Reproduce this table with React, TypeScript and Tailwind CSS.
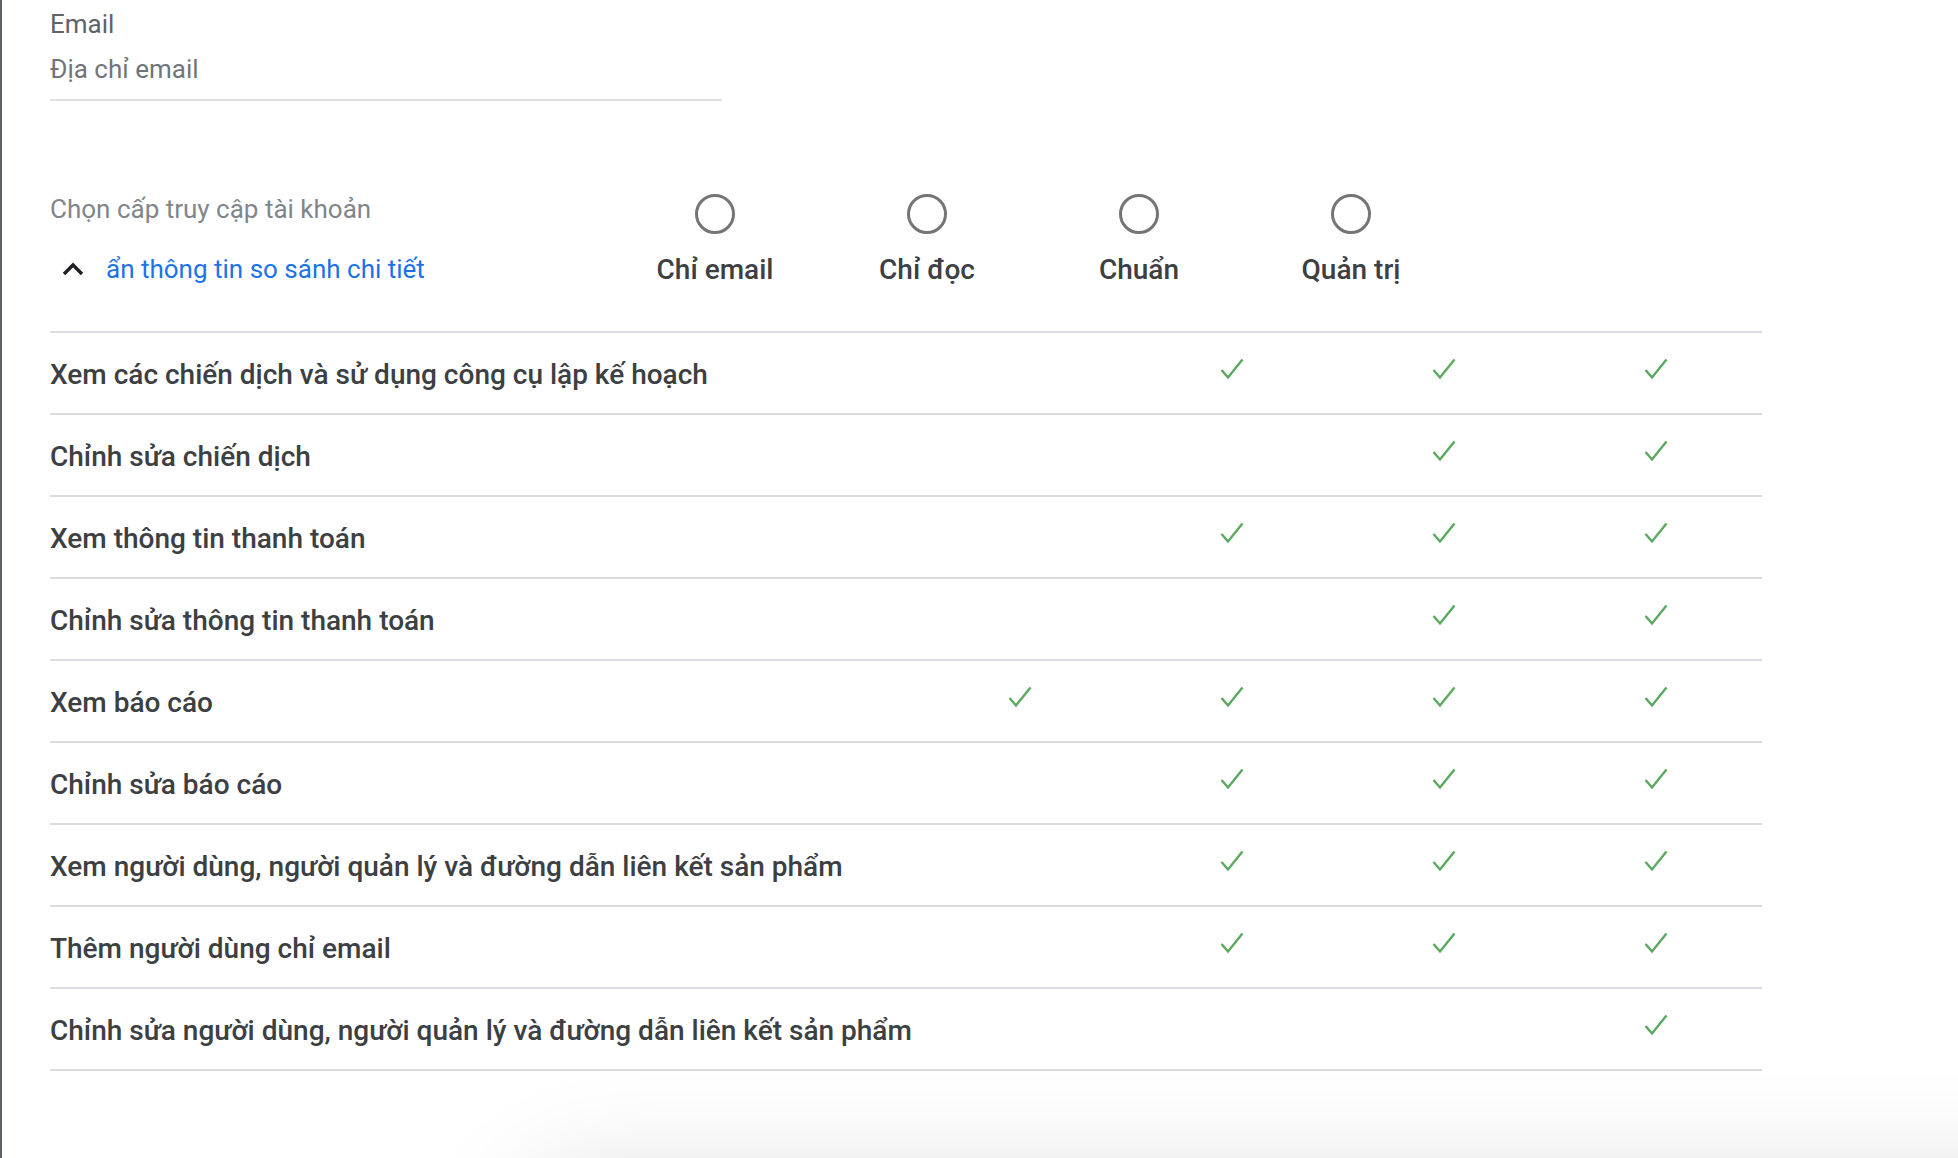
import * as React from "react";

const columns = ["Chỉ email", "Chỉ đọc", "Chuẩn", "Quản trị"];

const permissions: { label: string; access: boolean[] }[] = [
  { label: "Xem các chiến dịch và sử dụng công cụ lập kế hoạch", access: [false, true, true, true] },
  { label: "Chỉnh sửa chiến dịch", access: [false, false, true, true] },
  { label: "Xem thông tin thanh toán", access: [false, true, true, true] },
  { label: "Chỉnh sửa thông tin thanh toán", access: [false, false, true, true] },
  { label: "Xem báo cáo", access: [true, true, true, true] },
  { label: "Chỉnh sửa báo cáo", access: [false, true, true, true] },
  { label: "Xem người dùng, người quản lý và đường dẫn liên kết sản phẩm", access: [false, true, true, true] },
  { label: "Thêm người dùng chỉ email", access: [false, true, true, true] },
  { label: "Chỉnh sửa người dùng, người quản lý và đường dẫn liên kết sản phẩm", access: [false, false, false, true] },
];

function Check() {
  return (
    <svg width="26" height="22" viewBox="0 0 26 22" fill="none" className="mb-2">
      <path d="M2.5 12 L9 19.5 L23.5 1.5" stroke="#5aa95e" strokeWidth="2.4" />
    </svg>
  );
}

function ChevronUp() {
  return (
    <svg width="26" height="24" viewBox="0 0 26 24" fill="none">
      <path d="M4 17 L13 8 L22 17" stroke="#202124" strokeWidth="3.4" />
    </svg>
  );
}

export default function App() {
  return (
    <div
      className="relative h-[1158px] w-[1958px] overflow-hidden border-l-2 border-[#5f6368] bg-white pl-12 pt-2"
      style={{ fontFamily: "Roboto, 'Noto Sans', sans-serif" }}
    >
      {/* Email field */}
      <div className="w-[672px] border-b-2 border-[#e0e0e0] pb-[14px]">
        <div className="text-[26px] leading-[32px] text-[#5f6368]">Email</div>
        <div className="mt-[13px] text-[26px] leading-[32px] text-[#70757a]">Địa chỉ email</div>
      </div>

      {/* Access level header */}
      <div className="mt-[92px] grid w-[1712px] grid-cols-[559px_repeat(4,212px)] border-b-2 border-[#dadce0] pb-[45px]">
        <div>
          <div className="text-[26px] leading-[32px] text-[#80868b]">Chọn cấp truy cập tài khoản</div>
          <div className="mt-[28px] flex items-center gap-[20px] pl-[10px]">
            <ChevronUp />
            <span className="text-[26px] leading-[32px] text-[#1a73e8]">ẩn thông tin so sánh chi tiết</span>
          </div>
        </div>
        {columns.map((c) => (
          <div key={c} className="flex flex-col items-center">
            <div className="mt-px h-10 w-10 rounded-full border-[3px] border-[#757575]" />
            <div className="mt-[20px] text-[28px] font-medium leading-[32px] text-[#3c4043]">{c}</div>
          </div>
        ))}
      </div>

      {/* Comparison rows */}
      <div className="w-[1712px]">
        {permissions.map((p) => (
          <div
            key={p.label}
            className="grid h-[82px] grid-cols-[864px_repeat(4,212px)] items-center border-b-2 border-[#dadce0]"
          >
            <div className="pt-1 text-[28px] font-medium leading-[36px] text-[#3c4043]">{p.label}</div>
            {p.access.map((a, i) => (
              <div key={i} className="flex justify-center">
                {a ? <Check /> : null}
              </div>
            ))}
          </div>
        ))}
      </div>

      {/* soft shadow of the card below */}
      <div className="absolute left-[540px] top-[1200px] h-[300px] w-[1600px] rounded-[60px] bg-white shadow-[0_0_100px_40px_rgba(0,0,0,0.1)]" />
    </div>
  );
}
